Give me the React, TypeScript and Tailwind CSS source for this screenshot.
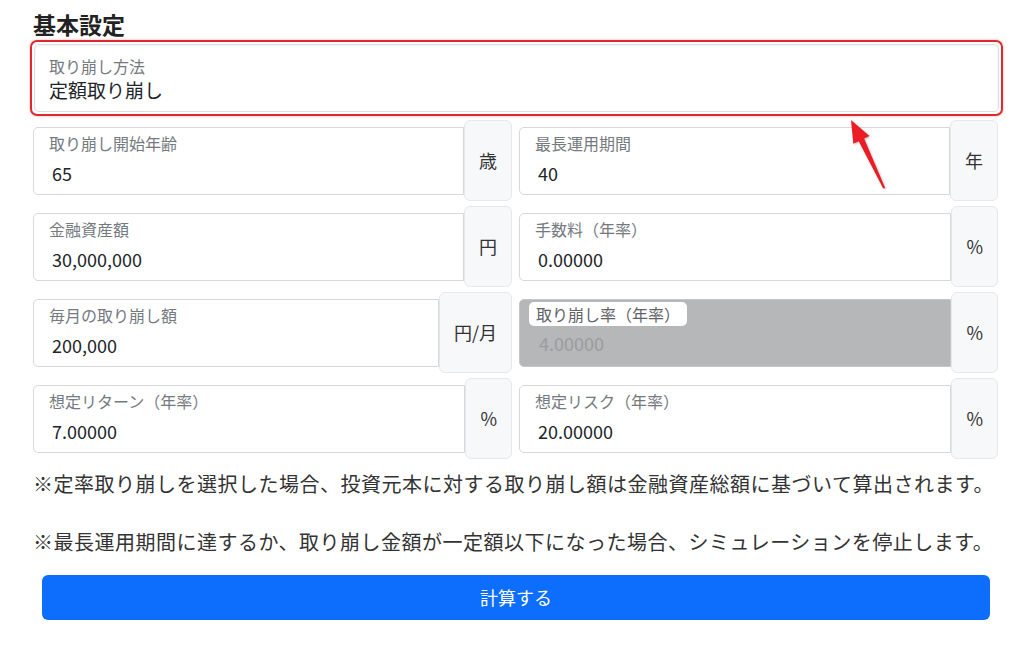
import React from "react";

type Field = {
  label: string;
  value: string;
  unit: string;
  disabled?: boolean;
};

const rows: [Field, Field][] = [
  [
    { label: "取り崩し開始年齢", value: "65", unit: "歳" },
    { label: "最長運用期間", value: "40", unit: "年" },
  ],
  [
    { label: "金融資産額", value: "30,000,000", unit: "円" },
    { label: "手数料（年率）", value: "0.00000", unit: "%" },
  ],
  [
    { label: "毎月の取り崩し額", value: "200,000", unit: "円/月" },
    { label: "取り崩し率（年率）", value: "4.00000", unit: "%", disabled: true },
  ],
  [
    { label: "想定リターン（年率）", value: "7.00000", unit: "%" },
    { label: "想定リスク（年率）", value: "20.00000", unit: "%" },
  ],
];

function InputGroup({ field }: { field: Field }) {
  return (
    <div className="flex h-[81px] min-w-0 flex-1 items-center">
      {field.disabled ? (
        <div className="flex h-[68px] min-w-0 flex-1 flex-col rounded-l-[5px] border border-[#c4c6c8] bg-[#b5b7b9] pl-[9px] pt-[2px]">
          <span className="self-start rounded-[5px] bg-white px-[7px] text-[16px] leading-[24px] text-[#5f6368]">
            {field.label}
          </span>
          <span className="mt-[5px] pl-[10px] text-[18px] leading-[24px] text-[#9a9da0]">
            {field.value}
          </span>
        </div>
      ) : (
        <div className="flex h-[68px] min-w-0 flex-1 flex-col rounded-l-[5px] border border-[#d6d9dc] bg-white pl-[15px] pt-[3px]">
          <span className="text-[16px] leading-[24px] text-[#757a7f]">{field.label}</span>
          <span className="mt-[6px] pl-[3px] text-[18px] leading-[24px] text-[#212529]">
            {field.value}
          </span>
        </div>
      )}
      <div className="flex h-full shrink-0 items-center rounded-[6px] border border-[#e6e8ea] bg-[#f7f8fa] px-[14px] text-[18px] text-[#333]">
        {field.unit}
      </div>
    </div>
  );
}

export default function App() {
  return (
    <div
      className="relative min-h-[649px] w-[1024px] bg-white pl-[33px] pr-[26px] pt-[8px] text-[#212529]"
      style={{ fontFamily: '"Noto Sans CJK JP", "Noto Sans", sans-serif' }}
    >
      <h2 className="text-[23px] font-bold leading-[32px] text-[#222]">基本設定</h2>

      <div className="-ml-[3px] -mr-[5px] rounded-[7px] border-2 border-[#e0282e] p-[2px] shadow-[0_0_3px_rgba(224,40,46,0.35)]">
        <div className="flex h-[68px] flex-col rounded-[5px] border border-[#dcdfe2] bg-white pl-[14px] pt-[9px] shadow-[inset_0_1px_3px_rgba(0,0,0,0.06)]">
          <span className="text-[16px] leading-[24px] text-[#757a7f]">取り崩し方法</span>
          <span className="-mt-[1px] text-[19px] leading-[26px] text-[#212529]">定額取り崩し</span>
        </div>
      </div>

      <div className="mt-[4px] flex flex-col gap-[5px]">
        {rows.map((r, i) => (
          <div key={i} className="flex gap-[7px]">
            <InputGroup field={r[0]} />
            <InputGroup field={r[1]} />
          </div>
        ))}
      </div>

      <p className="mt-[10px] text-[20px] leading-[30px] tracking-[0.5px] text-[#333]">
        ※定率取り崩しを選択した場合、投資元本に対する取り崩し額は金融資産総額に基づいて算出されます。
      </p>
      <p className="mt-[28px] text-[20px] leading-[30px] tracking-[0.5px] text-[#333]">
        ※最長運用期間に達するか、取り崩し金額が一定額以下になった場合、シミュレーションを停止します。
      </p>

      <button
        type="button"
        className="ml-[9px] mr-[8px] mt-[18px] flex h-[45px] w-[calc(100%-17px)] items-center justify-center rounded-[6px] bg-[#0d6efd] text-[18px] text-white"
      >
        計算する
      </button>

      <svg
        className="pointer-events-none absolute left-0 top-0"
        width="1024"
        height="649"
        viewBox="0 0 1024 649"
      >
        <polygon
          points="851,120 869.5,136.1 864.1,138.6 885.2,188 883.2,188.6 858.7,141.2 853.3,143.7"
          fill="#ec1c24"
          style={{ filter: "drop-shadow(1px 1px 1px rgba(0,0,0,0.25))" }}
        />
      </svg>
    </div>
  );
}
